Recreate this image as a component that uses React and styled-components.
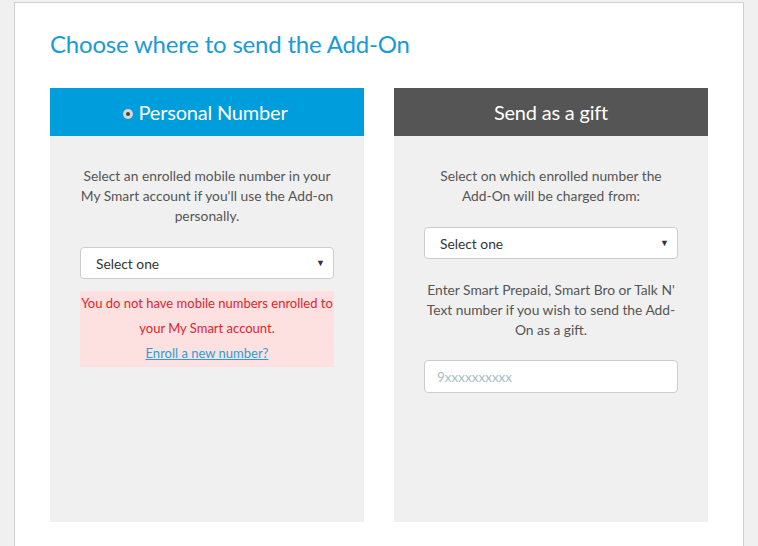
import React from 'react';
import styled, { createGlobalStyle } from 'styled-components';

const GlobalStyle = createGlobalStyle`
  html, body {
    margin: 0;
    padding: 0;
    background: #f0f0f0;
    font-family: Lato, "Open Sans", sans-serif;
  }
`;

const Page = styled.div`
  padding: 2px 14px 0 14px;
  height: 546px;
  box-sizing: border-box;
  overflow: hidden;
`;

const Card = styled.div`
  background: #fff;
  border: 1px solid #cfcfcf;
  padding: 27px 35px 24px 35px;
  min-height: 560px;
  box-sizing: border-box;
`;

const Title = styled.h2`
  margin: 0 0 30px 0;
  font-weight: 400;
  font-size: 24px;
  line-height: 28px;
  color: #1a9ad6;
  letter-spacing: -0.2px;
`;

const Columns = styled.div`
  display: grid;
  grid-template-columns: 314px 314px;
  column-gap: 30px;
`;

const Panel = styled.div`
  background: #f0f0f0;
  height: 434px;
  display: flex;
  flex-direction: column;
`;

const PanelHeader = styled.div`
  height: 48px;
  flex-shrink: 0;
  background: ${(p) => p.bg};
  color: #fff;
  font-size: 20px;
  display: flex;
  align-items: center;
  justify-content: center;
  gap: 6px;
  letter-spacing: -0.2px;
`;

const RadioDot = styled.span`
  width: 10px;
  height: 10px;
  border-radius: 50%;
  background: #d6d6d6;
  display: inline-flex;
  align-items: center;
  justify-content: center;
  margin-top: 3px;
  margin-left: -4px;
  &::after {
    content: '';
    width: 4px;
    height: 4px;
    border-radius: 50%;
    background: #444;
  }
`;

const PanelBody = styled.div`
  padding: 30px 30px 0 30px;
  display: flex;
  flex-direction: column;
`;

const Note = styled.p`
  margin: 0 0 ${(p) => p.mb || 0}px 0;
  font-size: 13.8px;
  line-height: 20px;
  color: #555;
  text-align: center;
`;

const SelectBox = styled.div`
  height: 32px;
  box-sizing: border-box;
  background: #fff;
  border: 1px solid #cccccc;
  border-radius: 4px;
  display: flex;
  align-items: center;
  justify-content: space-between;
  padding: 0 8px 0 15px;
  font-size: 13.8px;
  color: #333;
  margin-bottom: ${(p) => p.mb || 0}px;
`;

const Caret = styled.span`
  font-size: 9px;
  color: #333;
  margin-top: -2px;
`;

const ErrorBox = styled.div`
  background: #fde0e0;
  padding: 0 0 2px 0;
  text-align: center;
  font-size: 13px;
  line-height: 26px;
  color: #e0252e;
  white-space: nowrap;
`;

const ErrorLine = styled.div`
  line-height: ${(p) => p.lh || 26}px;
`;

const EnrollLink = styled.a`
  display: block;
  color: #2a9fd6;
  text-decoration: underline;
  font-size: 13px;
  line-height: 24px;
  cursor: pointer;
`;

const TextInput = styled.input`
  height: 33px;
  box-sizing: border-box;
  border: 1px solid #cccccc;
  border-radius: 4px;
  padding: 0 12px;
  font-family: inherit;
  font-size: 13.5px;
  background: #fff;
  outline: none;
  &::placeholder {
    color: #a9bcc2;
  }
`;

export default function App() {
  return (
    <Page>
      <GlobalStyle />
      <Card>
        <Title>Choose where to send the Add-On</Title>
        <Columns>
          <Panel>
            <PanelHeader bg="#009ddc">
              <RadioDot />
              Personal Number
            </PanelHeader>
            <PanelBody>
              <Note mb={21}>
                Select an enrolled mobile number in your My Smart account if you'll use the Add-on
                personally.
              </Note>
              <SelectBox mb={12}>
                Select one
                <Caret>▼</Caret>
              </SelectBox>
              <ErrorBox>
                <ErrorLine lh={24}>You do not have mobile numbers enrolled to</ErrorLine>
                <ErrorLine>your My Smart account.</ErrorLine>
                <EnrollLink>Enroll a new number?</EnrollLink>
              </ErrorBox>
            </PanelBody>
          </Panel>
          <Panel>
            <PanelHeader bg="#555555">Send as a gift</PanelHeader>
            <PanelBody>
              <Note mb={21}>
                Select on which enrolled number the
                <br />
                Add-On will be charged from:
              </Note>
              <SelectBox mb={21}>
                Select one
                <Caret>▼</Caret>
              </SelectBox>
              <Note mb={20}>
                Enter Smart Prepaid, Smart Bro or Talk N' Text number if you wish to send the Add-On
                as a gift.
              </Note>
              <TextInput placeholder="9xxxxxxxxxx" />
            </PanelBody>
          </Panel>
        </Columns>
      </Card>
    </Page>
  );
}
